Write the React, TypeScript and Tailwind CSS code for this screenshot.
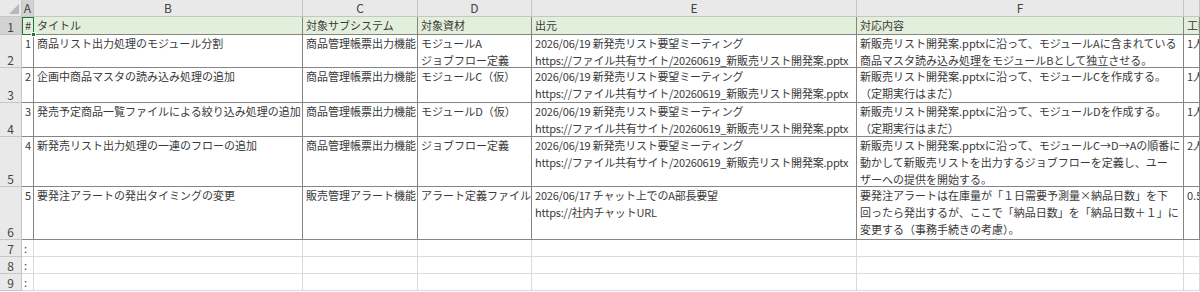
const cols = [22, 12, 269, 115, 114, 325, 327, 16];
const rowHeights = [17, 18, 33, 35, 34, 50, 53, 17, 17, 17];
const letters = ["A", "B", "C", "D", "E", "F", "G"];

const siryoUrl = "https://ファイル共有サイト/20260619_新販売リスト開発案.pptx";
const meeting = "2026/06/19 新発売リスト要望ミーティング";

type Row = string[][];

const header: Row = [
  ["#"],
  ["タイトル"],
  ["対象サブシステム"],
  ["対象資材"],
  ["出元"],
  ["対応内容"],
  ["工数"],
];

const rows: Row[] = [
  [
    ["1"],
    ["商品リスト出力処理のモジュール分割"],
    ["商品管理帳票出力機能"],
    ["モジュールA", "ジョブフロー定義"],
    [meeting, siryoUrl],
    [
      "新販売リスト開発案.pptxに沿って、モジュールAに含まれている",
      "商品マスタ読み込み処理をモジュールBとして独立させる。",
    ],
    ["1人日"],
  ],
  [
    ["2"],
    ["企画中商品マスタの読み込み処理の追加"],
    ["商品管理帳票出力機能"],
    ["モジュールC（仮）"],
    [meeting, siryoUrl],
    ["新販売リスト開発案.pptxに沿って、モジュールCを作成する。", "（定期実行はまだ）"],
    ["1人日"],
  ],
  [
    ["3"],
    ["発売予定商品一覧ファイルによる絞り込み処理の追加"],
    ["商品管理帳票出力機能"],
    ["モジュールD（仮）"],
    [meeting, siryoUrl],
    ["新販売リスト開発案.pptxに沿って、モジュールDを作成する。", "（定期実行はまだ）"],
    ["1人日"],
  ],
  [
    ["4"],
    ["新発売リスト出力処理の一連のフローの追加"],
    ["商品管理帳票出力機能"],
    ["ジョブフロー定義"],
    [meeting, siryoUrl],
    [
      "新販売リスト開発案.pptxに沿って、モジュールC→D→Aの順番に",
      "動かして新販売リストを出力するジョブフローを定義し、ユー",
      "ザーへの提供を開始する。",
    ],
    ["2人日"],
  ],
  [
    ["5"],
    ["要発注アラートの発出タイミングの変更"],
    ["販売管理アラート機能"],
    ["アラート定義ファイル"],
    ["2026/06/17 チャット上でのA部長要望", "https://社内チャットURL"],
    [
      "要発注アラートは在庫量が「１日需要予測量×納品日数」を下",
      "回ったら発出するが、ここで「納品日数」を「納品日数＋１」に",
      "変更する（事務手続きの考慮）。",
    ],
    ["0.5人日"],
  ],
];

function Cell({
  lines,
  first,
  green,
  tight,
}: {
  lines: string[];
  first?: boolean;
  green?: boolean;
  tight?: boolean;
}) {
  return (
    <div
      className={`overflow-hidden border-b border-r border-[#858585] leading-[17px] ${
        green ? "bg-[#e2efda]" : "bg-white"
      } ${first ? "pr-[2px] text-right" : "pl-[3px]"} ${tight ? "tracking-[-0.2px]" : ""}`}
    >
      {lines.map((l, i) => (
        <div key={i} className="whitespace-nowrap">
          {l}
        </div>
      ))}
    </div>
  );
}

function RowHead({ n, active }: { n: number; active?: boolean }) {
  return (
    <div
      className={`flex items-end justify-center border-b border-r border-[#c6c6c6] pb-[1px] text-[12px] leading-none text-[#444] ${
        active ? "bg-[#d2d2d2]" : "bg-[#e9e9e9]"
      }`}
    >
      {n}
    </div>
  );
}

export default function App() {
  return (
    <div
      className="h-[292px] w-[1200px] overflow-hidden bg-white text-[11px] text-[#3a3a3a]"
      style={{ fontFamily: '"Noto Sans CJK JP", "Noto Sans", sans-serif' }}
    >
      <div
        className="grid"
        style={{
          gridTemplateColumns: cols.map((c) => `${c}px`).join(" "),
          gridTemplateRows: rowHeights.map((r) => `${r}px`).join(" "),
        }}
      >
        {/* corner */}
        <div className="relative border-b border-r border-[#c6c6c6] bg-[#e9e9e9]">
          <div className="absolute bottom-[2px] right-[2px] h-0 w-0 border-b-[10px] border-l-[10px] border-b-[#b7b7b7] border-l-transparent" />
        </div>
        {letters.map((l, i) => (
          <div
            key={l}
            className={`flex items-center justify-center overflow-hidden border-b border-r border-[#c6c6c6] text-[12px] text-[#444] ${
              i === 0 ? "bg-[#d2d2d2]" : "bg-[#e9e9e9]"
            }`}
          >
            {i < 6 ? l : ""}
          </div>
        ))}

        {/* row 1 header */}
        <RowHead n={1} active />
        {header.map((c, i) =>
          i === 0 ? (
            <div
              key={i}
              className="relative border-[1.5px] border-[#217346] bg-[#e2efda] pl-[2px] leading-[15px]"
            >
              {c[0]}
              <div className="absolute -bottom-[3px] -right-[3px] h-[5px] w-[5px] border border-white bg-[#217346]" />
            </div>
          ) : (
            <Cell key={i} lines={c} green />
          )
        )}

        {rows.map((r, ri) => (
          <>
            <RowHead key={`h${ri}`} n={ri + 2} />
            {r.map((c, ci) => (
              <Cell key={`${ri}-${ci}`} lines={c} first={ci === 0} tight={ci === 4} />
            ))}
          </>
        ))}

        {[7, 8, 9].map((n) => (
          <>
            <RowHead key={`h${n}`} n={n} />
            <div key={`a${n}`} className="border-b border-r border-[#dadada] pl-[2px] leading-[16px]">
              :
            </div>
            {[0, 1, 2, 3, 4, 5].map((c) => (
              <div key={`${n}-${c}`} className="border-b border-r border-[#dadada]" />
            ))}
          </>
        ))}
      </div>
    </div>
  );
}
